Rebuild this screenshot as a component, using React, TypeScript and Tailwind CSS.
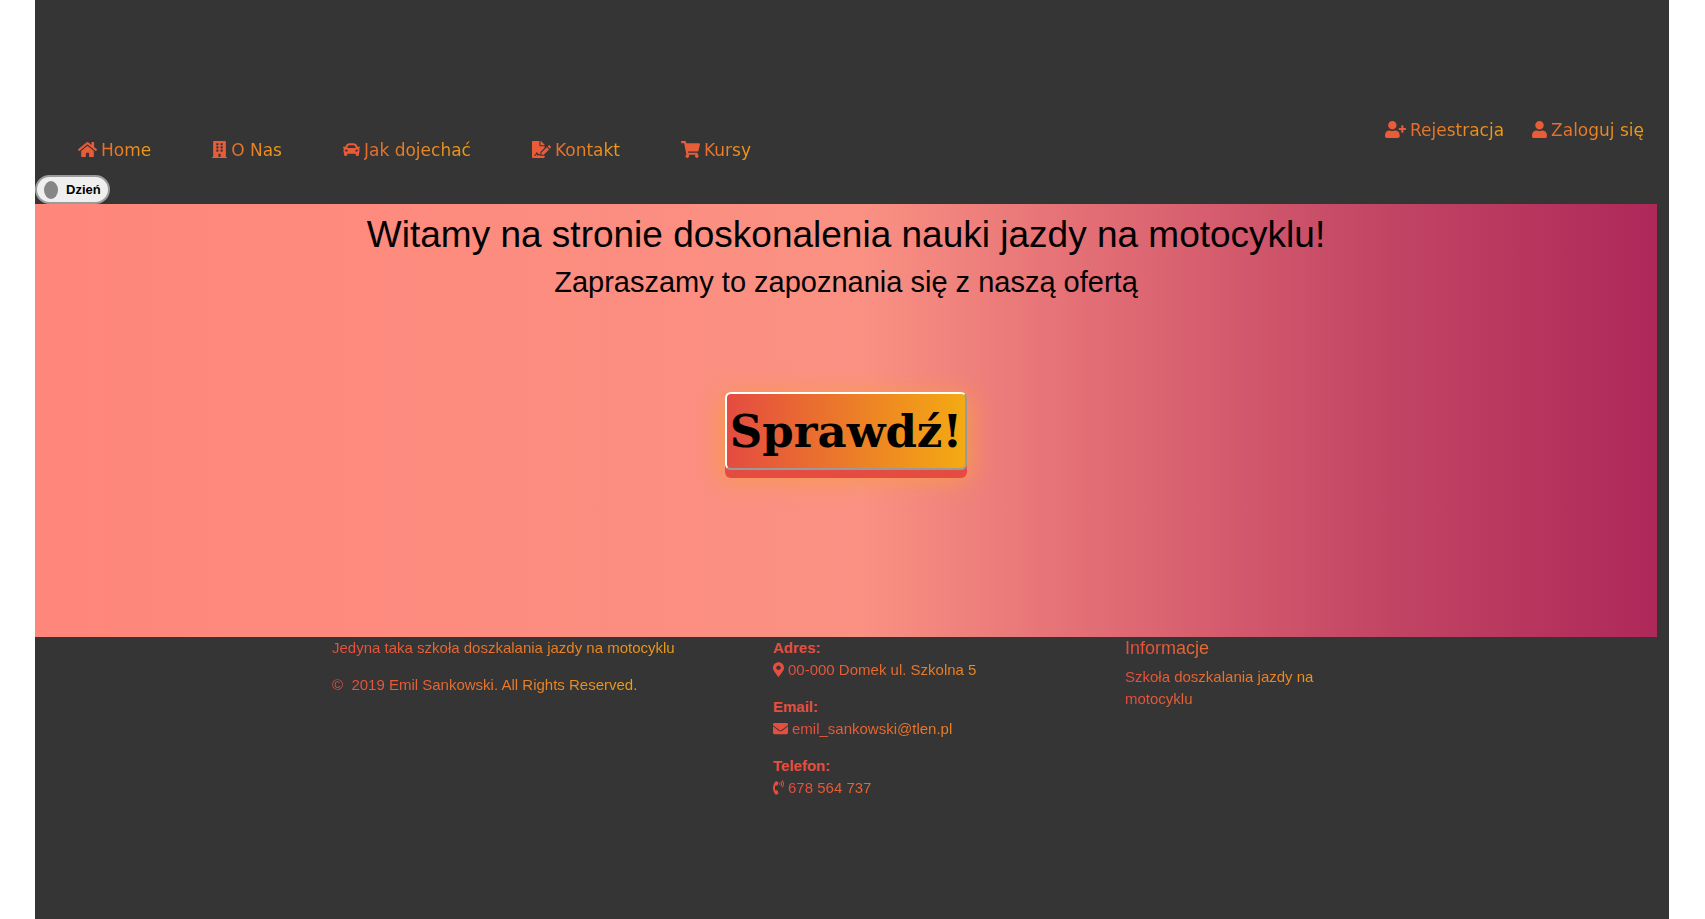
import type { ReactNode } from "react";
import type { IconType } from "react-icons";
import {
  FaBuilding,
  FaCar,
  FaEnvelope,
  FaFileSignature,
  FaHome,
  FaMapMarkerAlt,
  FaPhoneVolume,
  FaShoppingCart,
  FaUser,
  FaUserPlus,
} from "react-icons/fa";

type LinkItem = { label: string; icon: IconType; iconWidth: string };

const mainLinks: LinkItem[] = [
  { label: "Home", icon: FaHome, iconWidth: "w-[19px]" },
  { label: "O Nas", icon: FaBuilding, iconWidth: "w-[15px]" },
  { label: "Jak dojechać", icon: FaCar, iconWidth: "w-[17px]" },
  { label: "Kontakt", icon: FaFileSignature, iconWidth: "w-[19px]" },
  { label: "Kursy", icon: FaShoppingCart, iconWidth: "w-[19px]" },
];

const accountLinks: LinkItem[] = [
  { label: "Rejestracja", icon: FaUserPlus, iconWidth: "w-[21px]" },
  { label: "Zaloguj się", icon: FaUser, iconWidth: "w-[15px]" },
];

function NavLink({ label, icon: Icon, iconWidth }: LinkItem) {
  return (
    <a href="#" className="flex items-center gap-1">
      <Icon className={`mb-0.5 h-[17px] shrink-0 text-[#e85c38] ${iconWidth}`} />
      <span className="bg-[linear-gradient(90deg,#e66c30,#f19d15)] bg-clip-text text-transparent">{label}</span>
    </a>
  );
}

function Gradient({ children }: { children: ReactNode }) {
  return (
    <span className="block bg-[linear-gradient(90deg,#e64c40,#f19d15)] bg-clip-text text-transparent">{children}</span>
  );
}

function ContactEntry({
  title,
  icon: Icon,
  iconWidth,
  children,
}: {
  title: string;
  icon: IconType;
  iconWidth: string;
  children: ReactNode;
}) {
  return (
    <div>
      <dt className="font-bold text-[#e64f40]">{title}</dt>
      <dd className="flex items-center gap-1">
        <Icon className={`mb-0.5 h-[15px] shrink-0 text-[#e64f40] ${iconWidth}`} />
        <div className="grow">
          <Gradient>{children}</Gradient>
        </div>
      </dd>
    </div>
  );
}

export default function App() {
  return (
    <div className="min-h-screen bg-white pr-9 pl-[35px] font-['Liberation_Sans',Arial,sans-serif]">
      <div className="min-h-screen bg-[#353535]">
        <header>
          <nav className="flex items-start justify-between pt-[118px] pr-[25px] pl-[43px] font-['DejaVu_Sans',sans-serif] text-[17px] leading-6">
            <ul className="flex gap-[61px] pt-5">
              {mainLinks.map((link) => (
                <li key={link.label}>
                  <NavLink {...link} />
                </li>
              ))}
            </ul>
            <ul className="flex gap-7">
              {accountLinks.map((link) => (
                <li key={link.label}>
                  <NavLink {...link} />
                </li>
              ))}
            </ul>
          </nav>
          <button
            type="button"
            className="mt-[13px] flex h-[29px] items-center gap-2 rounded-full border-2 border-[#9b9b9b] bg-[#efefef] px-[7px] text-[13px] font-bold text-black"
          >
            <span className="h-[18px] w-3.5 rounded-[50%] bg-[#868686]" />
            Dzień
          </button>
        </header>

        <main className="mr-3 flex min-h-[433px] flex-col items-center bg-[linear-gradient(90deg,#ff867a_0%,#fa9183_51%,#e67377_63%,#c44765_82%,#ae2859_100%)] pt-[9px] text-black">
          <h1 className="text-[37px] leading-[44px]">Witamy na stronie doskonalenia nauki jazdy na motocyklu!</h1>
          <h2 className="mt-[7px] text-[29px] leading-9">Zapraszamy to zapoznania się z naszą ofertą</h2>
          <button
            type="button"
            className="mt-[92px] h-[78px] rounded-md border-2 border-t-white border-r-[#9a9a9a] border-b-[#9a9a9a] border-l-white bg-[linear-gradient(90deg,#e44b41,#f4aa12)] px-[3px] font-['DejaVu_Serif',serif] text-[45px] leading-none font-bold shadow-[0_8px_0_#e44b41,0_6px_24px_4px_#f79a4a]"
          >
            Sprawdź!
          </button>
        </main>

        <footer className="flex pl-[297px] text-[15px] leading-[22px]">
          <div className="flex w-[441px] flex-col items-start gap-[15px]">
            <Gradient>Jedyna taka szkoła doszkalania jazdy na motocyklu</Gradient>
            <Gradient>©&nbsp; 2019 Emil Sankowski. All Rights Reserved.</Gradient>
          </div>
          <dl className="flex w-[352px] flex-col gap-[15px] pr-[92px]">
            <ContactEntry title="Adres:" icon={FaMapMarkerAlt} iconWidth="w-[11px]">
              00-000 Domek ul. Szkolna 5
            </ContactEntry>
            <ContactEntry title="Email:" icon={FaEnvelope} iconWidth="w-[15px]">
              <a href="mailto:emil_sankowski@tlen.pl">emil_sankowski@tlen.pl</a>
            </ContactEntry>
            <ContactEntry title="Telefon:" icon={FaPhoneVolume} iconWidth="w-[11px]">
              678 564 737
            </ContactEntry>
          </dl>
          <div className="w-[210px]">
            <h3 className="mb-[7px] text-[18px]">
              <Gradient>Informacje</Gradient>
            </h3>
            <Gradient>Szkoła doszkalania jazdy na motocyklu</Gradient>
          </div>
        </footer>
      </div>
    </div>
  );
}
